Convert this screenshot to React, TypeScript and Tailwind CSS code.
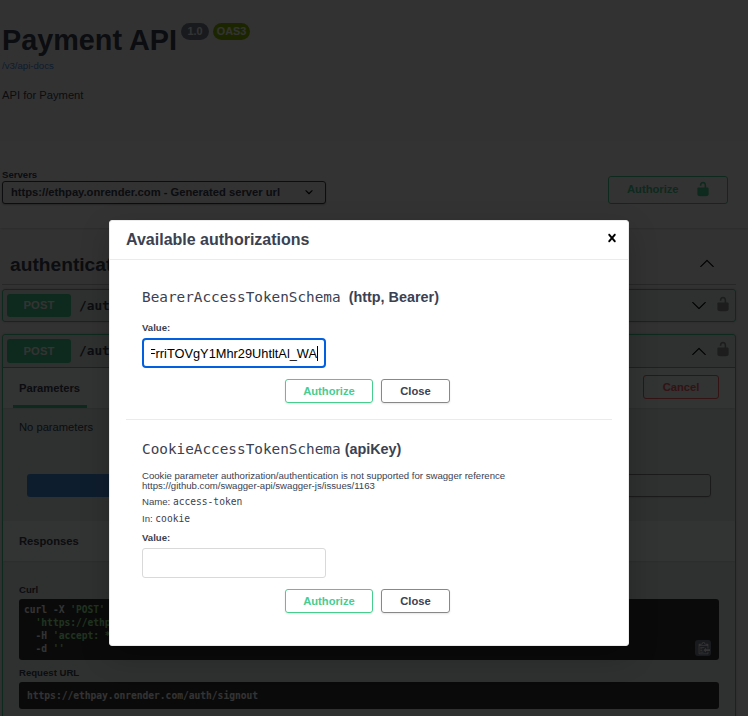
import React from "react";

const UNLOCK =
  "M15.8 8H14V5.6C14 2.703 12.665 1 10 1 7.334 1 6 2.703 6 5.6V6h2v-.801C8 3.754 8.797 3 10 3c1.203 0 2 .754 2 2.199V8H4c-.553 0-1 .646-1 1.199V17c0 .549.428 1.139.951 1.307l1.197.387C5.672 18.861 6.55 19 7.1 19h5.8c.549 0 1.428-.139 1.951-.307l1.196-.387c.524-.167.953-.757.953-1.306V9.199C17 8.646 16.352 8 15.8 8z";
const ARROW_UP =
  "M17.418 14.908c.272.268.709.268.979 0s.271-.701 0-.969l-7.908-7.83c-.27-.268-.707-.268-.979 0l-7.908 7.83c-.27.268-.27.701 0 .969.271.268.709.268.979 0L10 7.767l7.418 7.141z";
const SMALL_DOWN =
  "M13.418 7.859c.271-.268.709-.268.978 0 .27.268.272.701 0 .969l-3.908 3.83c-.27.268-.707.268-.979 0l-3.908-3.83c-.27-.267-.27-.701 0-.969.271-.268.709-.268.978 0L10 11l3.418-3.141z";
const CROSS =
  "M14.348 14.849c-.469.469-1.229.469-1.697 0L10 11.819l-2.651 3.029c-.469.469-1.229.469-1.697 0-.469-.469-.469-1.229 0-1.697l2.758-3.15-2.759-3.152c-.469-.469-.469-1.228 0-1.697.469-.469 1.228-.469 1.697 0L10 8.183l2.651-3.031c.469-.469 1.228-.469 1.697 0 .469.469.469 1.229 0 1.697l-2.758 3.152 2.758 3.15c.469.469.469 1.229 0 1.698z";
const CLIPBOARD =
  "M4 12h4v1H4v-1zm5-6H4v1h5V6zm2 3V7l-3 3 3 3v-2h5V9h-5zM6.5 8H4v1h2.5V8zM4 11h2.5v-1H4v1zm9 1h1v2c-.02.28-.11.52-.3.7-.19.18-.42.28-.7.3H3c-.55 0-1-.45-1-1V3c0-.55.45-1 1-1h3c0-1.11.89-2 2-2 1.11 0 2 .89 2 2h3c.55 0 1 .45 1 1v5h-1V5H3v9h10v-2zM4 4h8c0-.55-.45-1-1-1h-1c-.55 0-1-.45-1-1s-.45-1-1-1-1 .45-1 1-.45 1-1 1H5c-.55 0-1 .45-1 1z";

function Icon({ d, className = "" }: { d: string; className?: string }) {
  return (
    <svg viewBox="0 0 20 20" fill="currentColor" className={`block size-4 shrink-0 ${className}`}>
      <path d={d} />
    </svg>
  );
}

function Summary({ open = false }: { open?: boolean }) {
  return (
    <div className={`flex items-center pl-1 pr-1 ${open ? "h-[33px] border-b border-[#49cc90]" : "h-[31px]"}`}>
      <span className={`flex w-16 items-center justify-center rounded-[3px] bg-[#49cc90] text-[11.2px] font-bold tracking-[0.1px] text-white ${open ? "h-6" : "h-[23px]"}`}>
        POST
      </span>
      <span className="ml-2 grow font-['DejaVu_Sans_Mono',monospace] text-[12.8px] font-bold">/auth/signout</span>
      <Icon d={ARROW_UP} className={open ? "mr-2 text-black" : "mr-2 rotate-180 text-black"} />
      <Icon d={UNLOCK} className={`text-black opacity-40 ${open ? "-translate-y-[2px]" : "-translate-y-[2px]"}`} />
    </div>
  );
}

function SectionHeader({ children, className = "" }: { children: React.ReactNode; className?: string }) {
  return (
    <div className={`flex h-10 items-center bg-white/80 pl-4 pr-4 shadow-[0_1px_2px_rgba(0,0,0,0.1)] ${className}`}>
      {children}
    </div>
  );
}

const CURL_LINES = [
  { plain: "curl -X ", quoted: "'POST'", tail: " \\" },
  { plain: "  ", quoted: "'https://ethpay.onrender.com/auth/signout'", tail: " \\" },
  { plain: "  -H ", quoted: "'accept: */*'", tail: " \\" },
  { plain: "  -d ", quoted: "''", tail: "" },
];

function Page() {
  return (
    <div className="flex h-[716px] flex-col overflow-hidden">
      <header className="h-[141px] shrink-0 pl-[2px] pt-[22px]">
        <div className="flex h-[36px] items-start">
          <h1 className="w-[175px] whitespace-nowrap text-[28.8px] font-bold leading-[36px]">Payment API</h1>
          <span className="ml-1 mt-px flex h-[17px] w-7 items-center justify-center rounded-full bg-[#7d8492] text-[10.8px] font-bold text-white">1.0</span>
          <span className="ml-1 mt-px flex h-[17px] w-[37px] items-center justify-center rounded-full bg-[#89bf04] text-[10.8px] font-bold text-white">OAS3</span>
        </div>
        <div className="mt-[2px] text-[9.6px] leading-[12px] text-[#4990e2]">/v3/api-docs</div>
        <p className="mt-4 text-[11.2px] leading-[14px]">API for Payment</p>
      </header>

      <section className="flex h-[87px] shrink-0 justify-between bg-white pl-[2px] pr-5 shadow-[0_1px_2px_rgba(0,0,0,0.15)]">
        <div className="pt-7">
          <div className="h-[12px] text-[9.6px] font-bold leading-[12px]">Servers</div>
          <div className="flex h-[23px] w-[324px] items-center justify-between rounded-[3px] border border-[#41444e] bg-[#f7f7f7] pl-2 pr-2 text-[11.2px] font-bold shadow-[0_1px_2px_rgba(0,0,0,0.25)]">
            <span>https://ethpay.onrender.com - Generated server url</span>
            <Icon d={SMALL_DOWN} className="-translate-y-px text-black" />
          </div>
        </div>
        <div className="mt-[35px] flex h-7 w-[120px] items-center rounded-[3px] border border-[#49cc90] pl-[18px] text-[11.2px] font-bold text-[#49cc90]">
          <span className="-translate-y-px">Authorize</span>
          <Icon d={UNLOCK} className="ml-4 -translate-y-px" />
        </div>
      </section>

      <main className="ml-[2px] mt-[17px] w-[734px] shrink-0">
        <div className="flex h-10 items-center justify-between border-b border-[#3b4151]/30 pl-2 pr-[21px]">
          <h3 className="translate-y-px text-[19.2px] font-bold">authentication-controller</h3>
          <Icon d={ARROW_UP} className="-translate-y-[2px] text-black" />
        </div>

        <div className="mt-1 rounded-[3px] border border-[#49cc90] bg-[#49cc90]/10 shadow-[0_0_3px_rgba(0,0,0,0.19)]">
          <Summary />
        </div>

        <div className="mt-3 h-[420px] rounded-[3px] border border-[#49cc90] bg-[#49cc90]/10 shadow-[0_0_3px_rgba(0,0,0,0.19)]">
          <Summary open />
          <SectionHeader className="justify-between">
            <div className="-ml-[6px] flex h-full w-[74px] flex-col justify-between pt-[13px]">
              <span className="pl-[6px] text-[11.2px] font-bold leading-[14px]">Parameters</span>
              <span className="h-[3px] bg-[#49cc90]" />
            </div>
            <span className="flex h-6 w-[76px] -translate-y-px items-center justify-center rounded-[3px] border border-[#ff6060] text-[11.2px] font-bold text-[#ff6060]">Cancel</span>
          </SectionHeader>
          <p className="pl-4 pt-3 text-[11.2px] leading-[14px]">No parameters</p>
          <div className="mt-10 flex h-[23px] px-6">
            <div className="w-1/2 rounded-l-[3px] bg-[#4990e2]" />
            <div className="w-1/2 rounded-r-[3px] border border-[#888888] shadow-[0_1px_2px_rgba(0,0,0,0.1)]" />
          </div>
          <SectionHeader className="mt-6">
            <span className="text-[11.2px] font-bold">Responses</span>
          </SectionHeader>
          <div className="px-4 pt-[23px]">
            <div className="text-[9.6px] font-bold leading-[12px]">Curl</div>
            <div className="relative mt-[3px] h-[61px] rounded-[3px] bg-[#333333] pl-[5px] pt-1 text-[9.6px] font-bold text-white">
              {CURL_LINES.map((line) => (
                <pre key={line.quoted} className="font-['DejaVu_Sans_Mono',monospace] leading-[13px]">
                  <span>{line.plain}</span>
                  <span className="text-[#a2fca2]">{line.quoted}</span>
                  <span>{line.tail}</span>
                </pre>
              ))}
              <span className="absolute bottom-1 right-2 flex size-4 items-center justify-center rounded-[3px] bg-[#7d8293]">
                <svg viewBox="0 0 16 16" fill="#ffffff" className="size-[13px]">
                  <path d={CLIPBOARD} />
                </svg>
              </span>
            </div>
            <div className="mt-[7px] text-[9.6px] font-bold leading-[12px]">Request URL</div>
            <div className="mt-[3px] flex h-[27px] items-center rounded-[3px] bg-[#333333] pl-2 pt-[2px] font-['DejaVu_Sans_Mono',monospace] text-[9.6px] font-bold text-white">
              https://ethpay.onrender.com/auth/signout
            </div>
          </div>
        </div>
      </main>
    </div>
  );
}

function Actions() {
  return (
    <div className="flex h-6 justify-center gap-2 pr-[3px] text-[11.2px] font-bold">
      <button className="w-[88px] rounded-[3px] border border-[#49cc90] text-[#49cc90] shadow-[0_1px_2px_rgba(0,0,0,0.1)]">Authorize</button>
      <button className="w-[69px] rounded-[3px] border border-[#888888] shadow-[0_1px_2px_rgba(0,0,0,0.1)]">Close</button>
    </div>
  );
}

function Modal() {
  return (
    <div className="absolute left-[109px] top-[220px] h-[426px] w-[520px] rounded-[3px] border border-[#ebebeb] bg-white shadow-[0_10px_30px_rgba(0,0,0,0.2)]">
      <div className="flex h-[39px] items-center justify-between border-b border-[#ebebeb] pl-4 pr-2">
        <h3 className="text-[16px] font-bold">Available authorizations</h3>
        <Icon d={CROSS} className="-translate-y-[2px] text-black" />
      </div>
      <div className="px-4">
        <section className="h-[160px] border-b border-[#ebebeb] px-4 pt-[29px]">
          <h4 className="flex h-[18px] items-center whitespace-pre text-[14.4px] font-bold">
            <code className="font-['DejaVu_Sans_Mono',monospace] text-[14.35px] font-normal">BearerAccessTokenSchema</code>
            <span className="ml-2">(http, Bearer)</span>
          </h4>
          <div className="mt-[15px] text-[9.6px] font-bold leading-[12px]">Value:</div>
          <div className="mt-1 flex h-[30px] w-[184px] items-center rounded-[4px] border-2 border-[#0060df] bg-white pl-[7px] pr-[6px] pt-px text-black">
            <div className="flex min-w-0 grow justify-end overflow-hidden">
              <span className="text-[12.8px] leading-4">FrriTOVgY1Mhr29UhtltAl_WA</span>
            </div>
            <span className="h-[15px] w-px shrink-0 bg-black" />
          </div>
          <div className="mt-[11px]"><Actions /></div>
        </section>
        <section className="px-4 pt-[21px]">
          <h4 className="flex h-[18px] items-center text-[14.4px] font-bold">
            <code className="font-['DejaVu_Sans_Mono',monospace] text-[14.35px] font-normal">CookieAccessTokenSchema</code>
            <span className="ml-1">(apiKey)</span>
          </h4>
          <p className="mt-3 text-[9.6px] leading-[10px]">
            Cookie parameter authorization/authentication is not supported for swagger reference
            <br />
            https://github.com/swagger-api/swagger-js/issues/1163
          </p>
          <p className="mt-[5px] text-[9.6px] leading-[12px]">
            Name: <code className="font-['DejaVu_Sans_Mono',monospace]">access-token</code>
          </p>
          <p className="mt-[5px] text-[9.6px] leading-[12px]">
            In: <code className="font-['DejaVu_Sans_Mono',monospace]">cookie</code>
          </p>
          <div className="mt-[7px] text-[9.6px] font-bold leading-[12px]">Value:</div>
          <div className="mt-1 h-[30px] w-[184px] rounded-[3px] border border-[#d9d9d9] bg-white" />
          <div className="mt-[11px]"><Actions /></div>
        </section>
      </div>
    </div>
  );
}

export default function App() {
  return (
    <div className="relative h-[716px] w-[748px] overflow-hidden bg-[#fafafa] font-['Liberation_Sans',Arial,sans-serif] text-[#3b4151]">
      <Page />
      <div className="absolute inset-0 bg-black/80">
        <Modal />
      </div>
    </div>
  );
}
